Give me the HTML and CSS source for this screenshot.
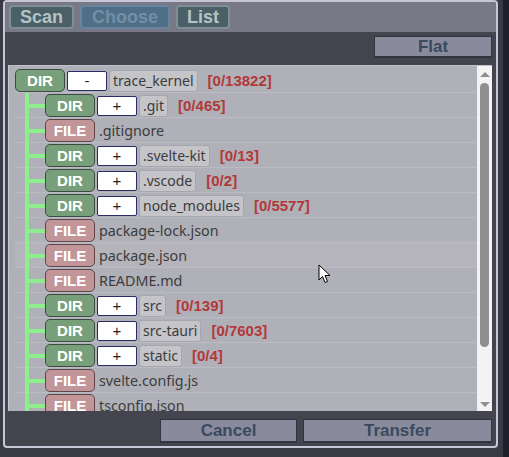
FILE: index.html
```html
<!DOCTYPE html>
<html lang="en">
<head>
    <meta charset="UTF-8">
    <title>Transfer</title>
    <link rel="stylesheet" href="styles.css">
</head>
<body>
    <div class="frame">
        <div class="topbar">
            <button class="tab">Scan</button>
            <button class="tab tab-active">Choose</button>
            <button class="tab">List</button>
        </div>
        <div class="toolbar">
            <button class="action flat-btn">Flat</button>
        </div>
        <div class="panel">
            <div class="tree">
                <div class="row">
                    <span class="kind dir">DIR</span>
                    <span class="toggle">-</span>
                    <span class="name">trace_kernel</span>
                    <span class="count">[0/13822]</span>
                </div>
                <div class="row child">
                    <span class="guide"></span>
                    <span class="kind dir">DIR</span>
                    <span class="toggle">+</span>
                    <span class="name">.git</span>
                    <span class="count">[0/465]</span>
                </div>
                <div class="row child">
                    <span class="guide"></span>
                    <span class="kind file">FILE</span>
                    <span class="file-name">.gitignore</span>
                </div>
                <div class="row child">
                    <span class="guide"></span>
                    <span class="kind dir">DIR</span>
                    <span class="toggle">+</span>
                    <span class="name">.svelte-kit</span>
                    <span class="count">[0/13]</span>
                </div>
                <div class="row child">
                    <span class="guide"></span>
                    <span class="kind dir">DIR</span>
                    <span class="toggle">+</span>
                    <span class="name">.vscode</span>
                    <span class="count">[0/2]</span>
                </div>
                <div class="row child">
                    <span class="guide"></span>
                    <span class="kind dir">DIR</span>
                    <span class="toggle">+</span>
                    <span class="name">node_modules</span>
                    <span class="count">[0/5577]</span>
                </div>
                <div class="row child">
                    <span class="guide"></span>
                    <span class="kind file">FILE</span>
                    <span class="file-name">package-lock.json</span>
                </div>
                <div class="row child hover">
                    <span class="guide"></span>
                    <span class="kind file">FILE</span>
                    <span class="file-name">package.json</span>
                </div>
                <div class="row child">
                    <span class="guide"></span>
                    <span class="kind file">FILE</span>
                    <span class="file-name">README.md</span>
                </div>
                <div class="row child">
                    <span class="guide"></span>
                    <span class="kind dir">DIR</span>
                    <span class="toggle">+</span>
                    <span class="name">src</span>
                    <span class="count">[0/139]</span>
                </div>
                <div class="row child">
                    <span class="guide"></span>
                    <span class="kind dir">DIR</span>
                    <span class="toggle">+</span>
                    <span class="name">src-tauri</span>
                    <span class="count">[0/7603]</span>
                </div>
                <div class="row child">
                    <span class="guide"></span>
                    <span class="kind dir">DIR</span>
                    <span class="toggle">+</span>
                    <span class="name">static</span>
                    <span class="count">[0/4]</span>
                </div>
                <div class="row child">
                    <span class="guide"></span>
                    <span class="kind file">FILE</span>
                    <span class="file-name">svelte.config.js</span>
                </div>
                <div class="row child">
                    <span class="guide"></span>
                    <span class="kind file">FILE</span>
                    <span class="file-name">tsconfig.json</span>
                </div>
            </div>
            <div class="scrollbar">
                <span class="arrow up"></span>
                <span class="thumb"></span>
                <span class="arrow down"></span>
            </div>
        </div>
        <div class="footer">
            <button class="action cancel-btn">Cancel</button>
            <button class="action transfer-btn">Transfer</button>
        </div>
    </div>
    <svg class="cursor" width="14" height="22" viewBox="0 0 14 22">
        <path d="M1 1 L1 16 L4.5 12.5 L7 18.5 L9.5 17.5 L7 11.5 L12 11.5 Z" fill="#fff" stroke="#000" stroke-width="1"></path>
    </svg>
</body>
</html>
```

FILE: styles.css
```css
* {
  margin: 0;
  padding: 0;
  box-sizing: border-box;
}

body {
  width: 509px;
  height: 457px;
  overflow: hidden;
  position: relative;
  background-color: #3a3a46;
  border-right: 6px solid #1f1f2b;
  font-family: 'Liberation Sans', Arial, sans-serif;
}

button {
  font-family: 'Liberation Sans', Arial, sans-serif;
  font-weight: bold;
  cursor: pointer;
}

.frame {
  margin-left: 3px;
  width: 495px;
  height: 448px;
  border: 2px solid #c6c6d6;
  border-radius: 4px;
  background-color: #44444f;
  display: flex;
  flex-direction: column;
  overflow: hidden;
}

.topbar {
  height: 30px;
  flex-shrink: 0;
  display: flex;
  gap: 6px;
  padding: 3px 4px;
  background-color: #787886;
}

.tab {
  height: 24px;
  padding: 0 9px;
  font-size: 18px;
  color: #b5c3c4;
  background-color: #4a5f66;
  border: 2px solid #7f9095;
  border-radius: 4px;
}

.tab-active {
  padding: 0 10px;
  color: #7190a6;
  background-color: #4f6f87;
  border-color: #6984a0;
}

.toolbar {
  display: flex;
  justify-content: flex-end;
  padding: 4px 4px 0;
}

.action {
  height: 22px;
  font-size: 17px;
  color: #394a5e;
  background-color: #8a8a9d;
  border: 1px solid #33333f;
  border-bottom-width: 2px;
}

.flat-btn {
  width: 118px;
}

.panel {
  margin: 7px 4px 0 3px;
  height: 346px;
  flex-shrink: 0;
  display: flex;
  background-color: #b0b0b8;
  border-left: 1px solid #c8c8d0;
  border-top: 1px solid #c0c0c8;
}

.tree {
  flex: 1;
  overflow: hidden;
  padding: 2px 0 0 6px;
}

.row {
  height: 25px;
  display: flex;
  align-items: center;
  background: linear-gradient(#bbbbc3, #bbbbc3) left bottom / 100% 1px no-repeat;
}

.row.hover {
  background-color: #b4b4ba;
}

.guide {
  width: 30px;
  align-self: stretch;
  flex-shrink: 0;
  background:
    linear-gradient(#8cef8c, #8cef8c) 10px 0 / 4px 100% no-repeat,
    linear-gradient(#8cef8c, #8cef8c) 14px 50% / 16px 4px no-repeat;
}

.kind {
  width: 50px;
  height: 23px;
  flex-shrink: 0;
  display: flex;
  align-items: center;
  justify-content: center;
  font-size: 15px;
  font-weight: bold;
  color: #fff;
  border: 1px solid #3d4a42;
  border-radius: 5px;
}

.dir {
  background-color: #779f79;
}

.file {
  background-color: #c29599;
  border-color: #5c4649;
}

.toggle {
  width: 40px;
  height: 20px;
  margin-left: 2px;
  display: flex;
  align-items: center;
  justify-content: center;
  font-size: 15px;
  color: #222;
  background-color: #fff;
  border: 1px solid #2b2b68;
  border-radius: 2px;
}

.name {
  margin-left: 2px;
  height: 22px;
  padding: 0 3px;
  display: flex;
  align-items: center;
  font-family: 'Noto Sans', sans-serif;
  font-size: 14px;
  color: #3c3c3c;
  background-color: #c4c4c9;
  border: 1px solid #a6a6ae;
  border-radius: 3px;
}

.file-name {
  margin-left: 4px;
  font-family: 'Noto Sans', sans-serif;
  font-size: 14.3px;
  color: #3c3c3c;
}

.count {
  margin-left: 10px;
  font-size: 15px;
  font-weight: bold;
  color: #b2393a;
}

.scrollbar {
  width: 15px;
  flex-shrink: 0;
  display: flex;
  flex-direction: column;
  align-items: center;
  padding: 6px 0 4px;
  background-color: #f3f3f3;
}

.arrow {
  width: 0;
  height: 0;
  border-left: 5px solid transparent;
  border-right: 5px solid transparent;
}

.arrow.up {
  border-bottom: 5px solid #8f8f8f;
}

.arrow.down {
  margin-top: auto;
  border-top: 5px solid #8f8f8f;
}

.thumb {
  margin-top: 6px;
  width: 9px;
  height: 264px;
  background-color: #8f8f8f;
  border-radius: 5px;
}

.footer {
  margin-top: 8px;
  display: flex;
  justify-content: flex-end;
  gap: 6px;
  padding: 0 4px;
}

.footer .action {
  height: 24px;
}

.cancel-btn {
  width: 137px;
}

.transfer-btn {
  width: 189px;
}

.cursor {
  position: absolute;
  left: 318px;
  top: 264px;
}
```
